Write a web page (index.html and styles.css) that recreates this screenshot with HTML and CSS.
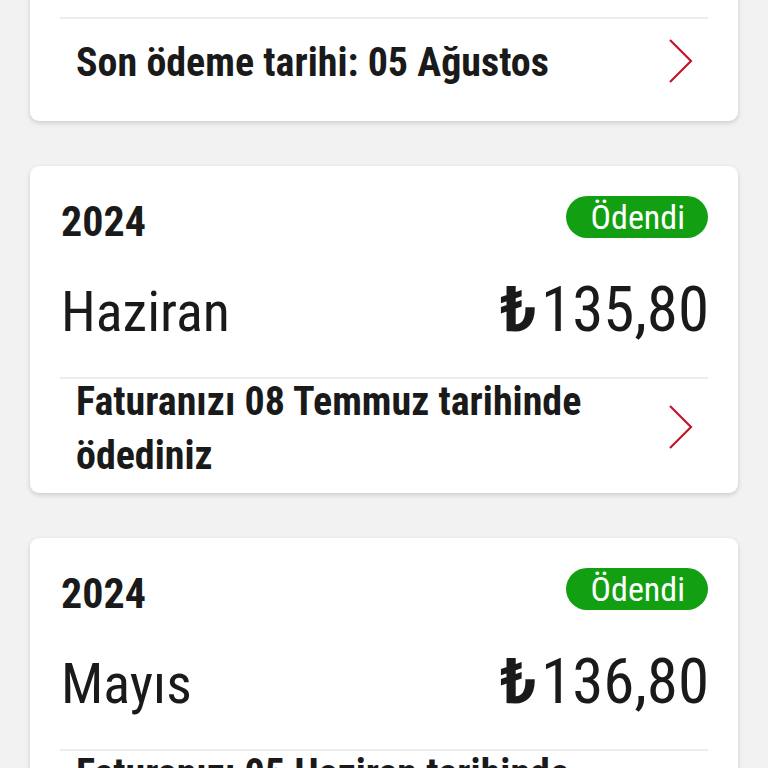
FILE: index.html
```html
<!DOCTYPE html>
<html lang="tr">
<head>
<meta charset="utf-8">
<title>Faturalar</title>
<link rel="stylesheet" href="styles.css">
</head>
<body>
<main class="list">
  <section class="card">
    <div class="card-head">
      <span class="year">2024</span>
      <span class="badge badge-due">Ödenmedi</span>
    </div>
    <div class="amount-row">
      <span class="month">Temmuz</span>
      <span class="amount"><span class="lira">₺</span>134,80</span>
    </div>
    <a class="detail-row" href="#">
      <span class="detail-text">Son ödeme tarihi: 05 Ağustos</span>
      <svg class="chevron" viewBox="0 0 26 46" width="26" height="46"><path d="M3 2 L24 23 L3 44" /></svg>
    </a>
  </section>

  <section class="card">
    <div class="card-head">
      <span class="year">2024</span>
      <span class="badge">Ödendi</span>
    </div>
    <div class="amount-row">
      <span class="month">Haziran</span>
      <span class="amount"><span class="lira">₺</span>135,80</span>
    </div>
    <a class="detail-row" href="#">
      <span class="detail-text">Faturanızı 08 Temmuz tarihinde ödediniz</span>
      <svg class="chevron" viewBox="0 0 26 46" width="26" height="46"><path d="M3 2 L24 23 L3 44" /></svg>
    </a>
  </section>

  <section class="card">
    <div class="card-head">
      <span class="year">2024</span>
      <span class="badge">Ödendi</span>
    </div>
    <div class="amount-row">
      <span class="month">Mayıs</span>
      <span class="amount"><span class="lira">₺</span>136,80</span>
    </div>
    <a class="detail-row" href="#">
      <span class="detail-text">Faturanızı 05 Haziran tarihinde ödediniz</span>
      <svg class="chevron" viewBox="0 0 26 46" width="26" height="46"><path d="M3 2 L24 23 L3 44" /></svg>
    </a>
  </section>
</main>
</body>
</html>
```

FILE: styles.css
```css
* { box-sizing: border-box; }

html, body {
  margin: 0;
  padding: 0;
  background: #f2f2f2;
  overflow: hidden;
}

body {
  font-family: Roboto, "Liberation Sans", Arial, sans-serif;
  font-stretch: 75%;
  color: #1a1a1a;
}

.list {
  display: flex;
  flex-direction: column;
  gap: 45px;
  padding: 0 30px;
  margin-top: -194px;
}

.card {
  background: #fff;
  border-radius: 9px;
  box-shadow: 0 2px 5px rgba(0, 0, 0, 0.16);
  padding: 30px 30px 0 30px;
}

.card-head {
  display: flex;
  justify-content: space-between;
  align-items: flex-start;
  height: 42px;
}

.year {
  font-weight: bold;
  font-size: 42px;
  font-stretch: 78%;
  line-height: 42px;
  padding-top: 5px;
  padding-left: 1px;
}

.badge {
  height: 42px;
  border-radius: 21px;
  background: #12a012;
  color: #fff;
  font-size: 34px;
  font-stretch: 77%;
  line-height: 42px;
  padding: 0 23px 0 25px;
}

.badge-due {
  background: #e60000;
}

.amount-row {
  display: flex;
  justify-content: space-between;
  align-items: baseline;
  margin-top: 40px;
  height: 64px;
}

.month {
  font-size: 56px;
  font-stretch: 79%;
  line-height: 64px;
  padding-left: 1px;
}

.amount {
  font-size: 63px;
  font-stretch: 86%;
  line-height: 64px;
  margin-right: -1px;
}

.lira {
  font-weight: bold;
  font-stretch: 100%;
  margin-right: 4px;
}

.detail-row {
  display: flex;
  align-items: center;
  justify-content: space-between;
  gap: 40px;
  min-height: 104px;
  margin-top: 35px;
  padding: 0 16px 18px;
  border-top: 2px solid #ececec;
  color: inherit;
  text-decoration: none;
}

.detail-text {
  font-weight: bold;
  font-size: 40px;
  line-height: 54px;
  margin: -4px 0 -8px;
  max-width: 540px;
}

.chevron {
  flex: none;
  width: 26px;
  height: 46px;
  margin-right: -1px;
}

.chevron path {
  fill: none;
  stroke: #c4162a;
  stroke-width: 2.2;
}
```
